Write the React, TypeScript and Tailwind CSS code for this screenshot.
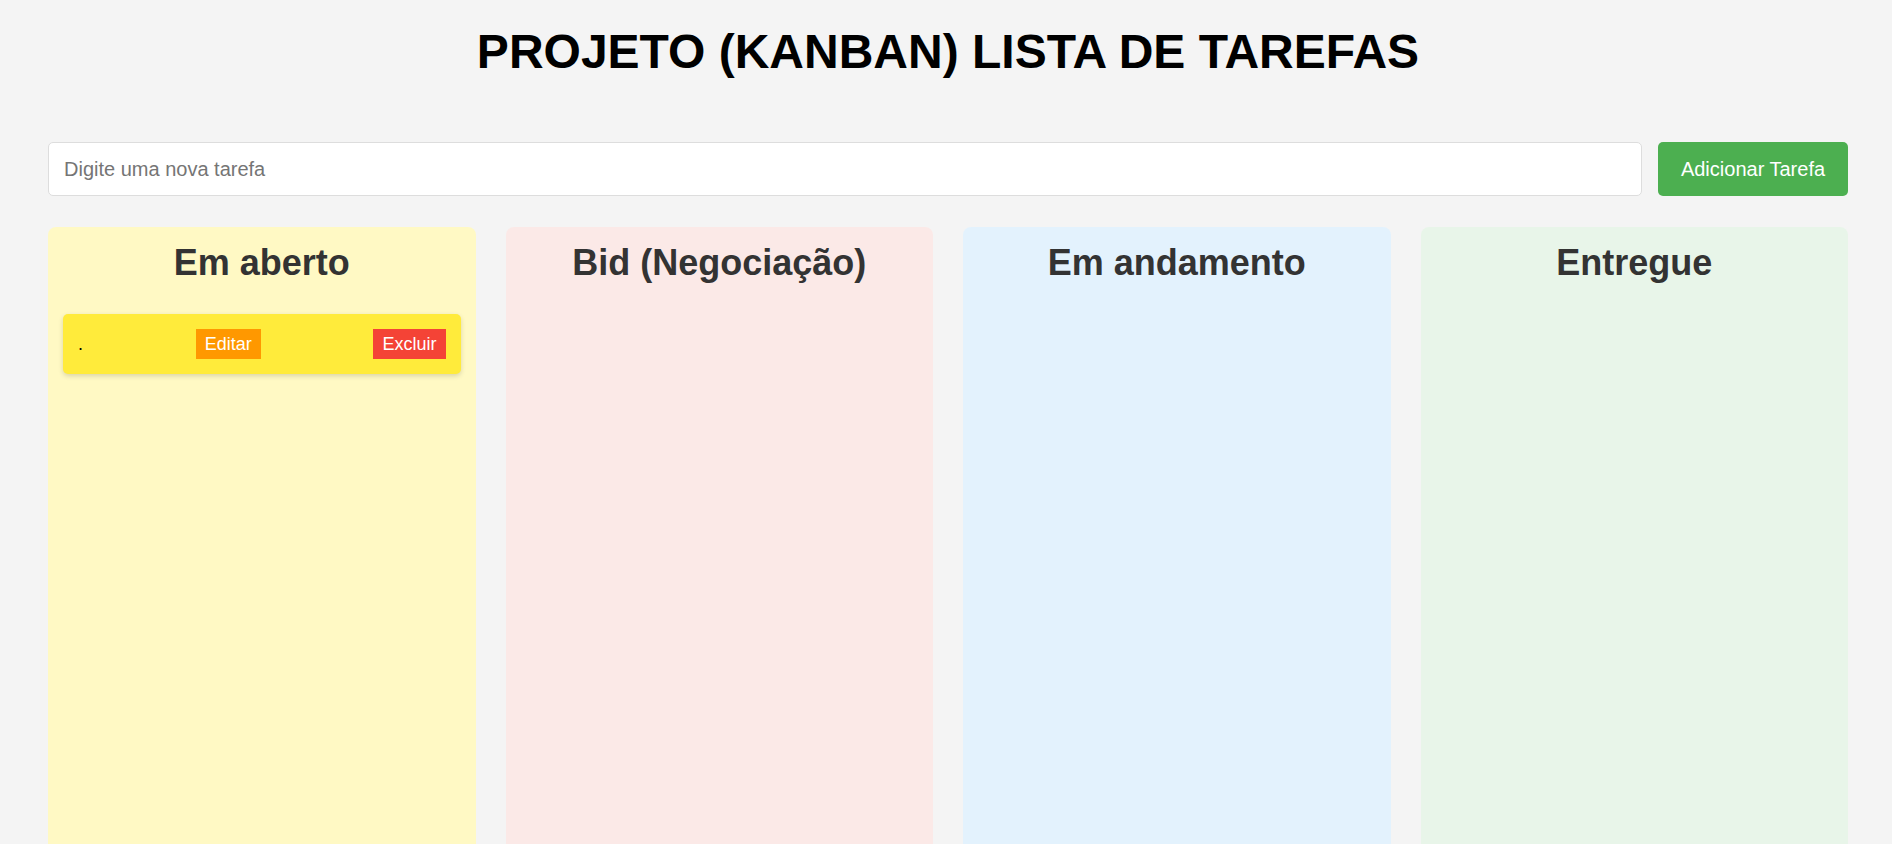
import React from 'react';

type Task = { id: number; text: string };

const columns = [
  { title: 'Em aberto', bg: 'bg-[#fff9c4]' },
  { title: 'Bid (Negociação)', bg: 'bg-[#fbe9e7]' },
  { title: 'Em andamento', bg: 'bg-[#e3f2fd]' },
  { title: 'Entregue', bg: 'bg-[#e8f5e9]' },
];

const tasks: Record<string, Task[]> = {
  'Em aberto': [{ id: 1, text: '.' }],
};

const TaskCard: React.FC<{ task: Task }> = ({ task }) => (
  <div className="flex items-center justify-between rounded-[5px] bg-[#ffeb3b] p-[15px] shadow-[0_2px_5px_rgba(0,0,0,0.15)]">
    <span className="text-[18px] text-black">{task.text}</span>
    <button className="bg-[#ff9800] px-[9px] py-[4px] text-[18px] leading-[22px] text-white">Editar</button>
    <button className="bg-[#f44336] px-[9px] py-[4px] text-[18px] leading-[22px] text-white">Excluir</button>
  </div>
);

export default function App() {
  return (
    <div className="min-h-screen bg-[#f4f4f4] pl-[48px] pr-[44px] font-['Liberation_Sans',Arial,sans-serif]">
      <h1 className="pt-[25px] text-center text-[48px] font-bold leading-[54px] text-black">
        PROJETO (KANBAN) LISTA DE TAREFAS
      </h1>

      {/* Nova tarefa */}
      <div className="mt-[63px] flex gap-[16px]">
        <input
          type="text"
          placeholder="Digite uma nova tarefa"
          className="h-[54px] flex-1 rounded-[5px] border border-[#dddddd] bg-white px-[15px] text-[20px] outline-none placeholder:text-[#757575]"
        />
        <button className="h-[54px] w-[190px] rounded-[5px] bg-[#4caf50] text-[20px] text-white">
          Adicionar Tarefa
        </button>
      </div>

      {/* Colunas */}
      <div className="mt-[31px] grid grid-cols-4 gap-[30px]">
        {columns.map((col) => (
          <div key={col.title} className={`min-h-[700px] rounded-[8px] p-[15px] ${col.bg}`}>
            <h2 className="mb-[31px] text-center text-[36px] font-bold leading-[41px] text-[#333333]">{col.title}</h2>
            <div className="flex flex-col gap-[10px]">
              {(tasks[col.title] || []).map((t) => (
                <TaskCard key={t.id} task={t} />
              ))}
            </div>
          </div>
        ))}
      </div>
    </div>
  );
}
